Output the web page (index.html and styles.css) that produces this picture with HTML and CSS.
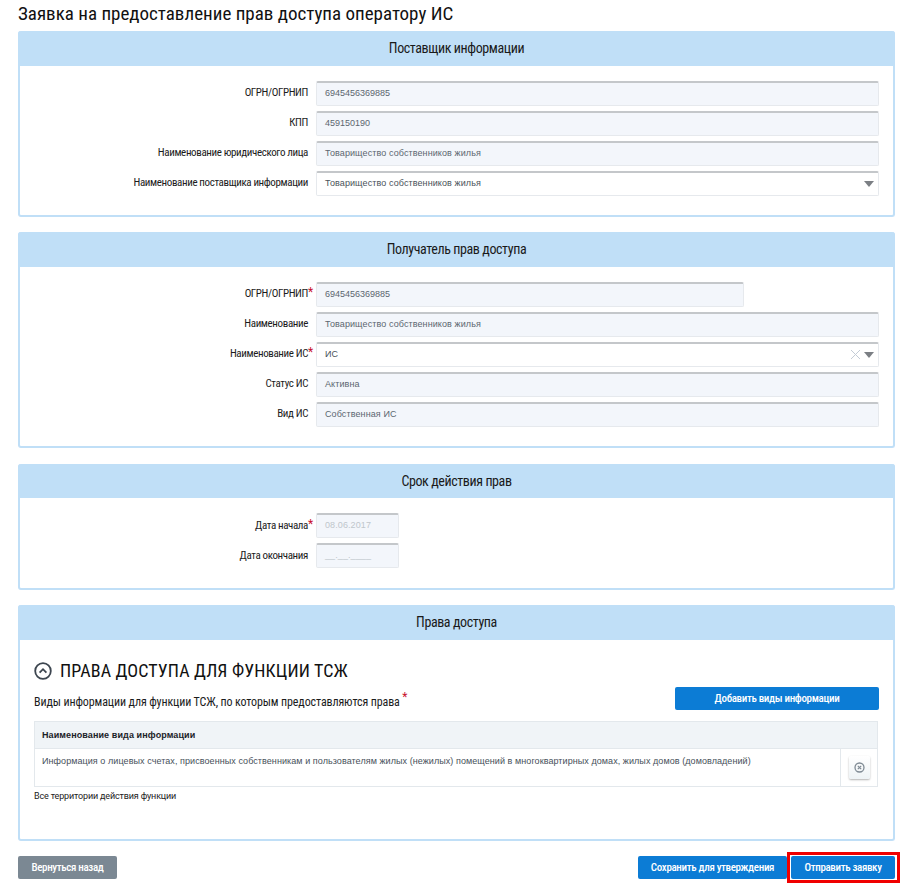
FILE: index.html
```html
<!DOCTYPE html>
<html lang="ru">
<head>
<meta charset="utf-8">
<title>Заявка</title>
<link rel="stylesheet" href="styles.css">
</head>
<body>
<h1 class="title">Заявка на предоставление прав доступа оператору ИС</h1>

<section class="panel">
  <h2 class="panel-head">Поставщик информации</h2>
  <div class="panel-body form">
    <div class="row"><label class="lbl">ОГРН/ОГРНИП</label><div class="field num">6945456369885</div></div>
    <div class="row"><label class="lbl">КПП</label><div class="field num">459150190</div></div>
    <div class="row"><label class="lbl">Наименование юридического лица</label><div class="field">Товарищество собственников жилья</div></div>
    <div class="row"><label class="lbl">Наименование поставщика информации</label><div class="field select">Товарищество собственников жилья<span class="arrow"></span></div></div>
  </div>
</section>

<section class="panel">
  <h2 class="panel-head">Получатель прав доступа</h2>
  <div class="panel-body form">
    <div class="row"><label class="lbl">ОГРН/ОГРНИП<span class="req">*</span></label><div class="field num short">6945456369885</div></div>
    <div class="row"><label class="lbl">Наименование</label><div class="field">Товарищество собственников жилья</div></div>
    <div class="row"><label class="lbl">Наименование ИС<span class="req">*</span></label><div class="field select">ИС
      <svg class="clear" width="11" height="11" viewBox="0 0 11 11"><path d="M1 1l9 9M10 1l-9 9" stroke="#c3ccd6" stroke-width="1" fill="none"/></svg><span class="arrow"></span></div></div>
    <div class="row"><label class="lbl">Статус ИС</label><div class="field">Активна</div></div>
    <div class="row"><label class="lbl">Вид ИС</label><div class="field">Собственная ИС</div></div>
  </div>
</section>

<section class="panel">
  <h2 class="panel-head">Срок действия прав</h2>
  <div class="panel-body form">
    <div class="row"><label class="lbl">Дата начала<span class="req">*</span></label><div class="field date muted">08.06.2017</div></div>
    <div class="row"><label class="lbl">Дата окончания</label><div class="field date muted">__.__.____</div></div>
  </div>
</section>

<section class="panel last">
  <h2 class="panel-head">Права доступа</h2>
  <div class="panel-body rights">
    <div class="fn-head">
      <svg class="fn-icon" width="18" height="18" viewBox="0 0 18 18"><circle cx="9" cy="9" r="7.8" fill="none" stroke="#3d4650" stroke-width="1.8"/><path d="M5.6 10.6L9 7.2l3.4 3.4" fill="none" stroke="#3d4650" stroke-width="1.8"/></svg>
      <span>ПРАВА ДОСТУПА ДЛЯ ФУНКЦИИ ТСЖ</span>
    </div>
    <div class="info-row">
      <div class="info-label">Виды информации для функции ТСЖ, по которым предоставляются права <sup class="req">*</sup></div>
      <button class="btn btn-add" type="button">Добавить виды информации</button>
    </div>
    <table class="tbl">
      <thead><tr><th colspan="2">Наименование вида информации</th></tr></thead>
      <tbody><tr>
        <td>Информация о лицевых счетах, присвоенных собственникам и пользователям жилых (нежилых) помещений в многоквартирных домах, жилых домов (домовладений)</td>
        <td class="act"><button class="del" type="button" aria-label="Удалить"><svg width="11" height="11" viewBox="0 0 11 11"><circle cx="5.5" cy="5.5" r="4.5" fill="none" stroke="#7f8a94" stroke-width="1.3"/><path d="M3.8 3.8l3.4 3.4M7.2 3.8l-3.4 3.4" stroke="#7f8a94" stroke-width="1.2" fill="none"/></svg></button></td>
      </tr></tbody>
    </table>
    <div class="note">Все территории действия функции</div>
  </div>
</section>

<footer class="actions">
  <button class="btn btn-grey" type="button">Вернуться назад</button>
  <div class="actions-right">
    <button class="btn btn-save" type="button">Сохранить для утверждения</button>
    <span class="highlight"><button class="btn btn-send" type="button">Отправить заявку</button></span>
  </div>
</footer>
</body>
</html>
```
FILE: styles.css
```css
* { box-sizing: border-box; }
html, body { margin: 0; padding: 0; background: #fff; }
body {
  width: 906px;
  height: 891px;
  overflow: hidden;
  padding: 0 11px 0 18px;
  font-family: Roboto, "Liberation Sans", sans-serif;
  font-stretch: 75%;
  color: #111;
}
.title {
  margin: 0;
  height: 31px;
  padding-top: 2px;
  font-size: 19px;
  line-height: 23px;
  font-weight: 400;
  color: #111;
}
.panel {
  border: 2px solid #c0dff7;
  border-top: 0;
  border-radius: 3px;
  margin-bottom: 15.7px;
  background: #fff;
}
.panel-head {
  margin: 0 -2px;
  height: 34.5px;
  background: #c0dff7;
  border-radius: 3px 3px 0 0;
  font-size: 14px;
  font-weight: 400;
  line-height: 35px;
  letter-spacing: -.4px;
  text-align: center;
  color: #1a1a1a;
}
.form { padding: 15px 0 19.3px; display: flex; flex-direction: column; gap: 5px; }
.row { display: flex; align-items: center; height: 25px; }
.lbl {
  width: 288px;
  flex: none;
  text-align: right;
  font-size: 11px;
  line-height: 14px;
  letter-spacing: -.38px;
  color: #1c1c1c;
  position: relative;
}
.req { color: #c8102e; font-size: 12px; letter-spacing: 0; }
.lbl .req { position: absolute; left: 288px; top: -2px; }
.field {
  margin-left: 8px;
  width: 563px;
  height: 25px;
  flex: none;
  border: 1px solid #e6e9ed;
  border-top: 2px solid #c4c7ca;
  border-radius: 2px;
  background: #f3f6fb;
  padding-left: 8px;
  font-family: "Liberation Sans", sans-serif;
  font-stretch: normal;
  font-size: 9px;
  letter-spacing: .1px;
  line-height: 21px;
  color: #5c6670;
  position: relative;
}
.num { letter-spacing: 0; }
.short { width: 428px; }
.date { width: 83px; }
.muted { color: #c0c6cc; }
.select { background: #fff; color: #4a525a; }
.arrow {
  position: absolute;
  right: 4px;
  top: 8px;
  width: 0; height: 0;
  border-left: 5px solid transparent;
  border-right: 5px solid transparent;
  border-top: 6px solid #7b7f84;
}
.clear { position: absolute; right: 17px; top: 5px; }
.rights { padding: 19px 0 0 14px; height: 198.7px; }
.fn-head {
  display: flex;
  align-items: center;
  gap: 8px;
  height: 24px;
  font-size: 18px;
  letter-spacing: .14px;
  color: #111;
}
.info-row {
  display: flex;
  justify-content: space-between;
  align-items: flex-start;
  margin-top: 4px;
  width: 845px;
  height: 23px;
}
.info-label { font-size: 12px; line-height: 15px; padding-top: 8px; letter-spacing: -.12px; color: #1c1c1c; }
.info-label .req { font-size: 12px; line-height: 0; }
.btn {
  border: 0;
  border-radius: 2px;
  height: 23px;
  font-family: Roboto, "Liberation Sans", sans-serif;
  font-stretch: 75%;
  font-size: 11px;
  font-weight: 500;
  letter-spacing: -.34px;
  color: #fff;
  background: #0c7cd5;
  padding: 0;
}
.btn-add { width: 204px; }
.tbl {
  border-collapse: collapse;
  width: 844px;
  margin-top: 11px;
  font-family: "Liberation Sans", sans-serif;
  font-stretch: normal;
  font-size: 9px;
  letter-spacing: .07px;
}
.tbl th {
  height: 27px;
  background: #f0f4f7;
  border: 1px solid #e3e8ec;
  text-align: left;
  padding: 0 7px;
  font-weight: 700;
  letter-spacing: .1px;
  color: #1b2228;
}
.tbl td {
  height: 38px;
  border: 1px solid #e3e8ec;
  padding: 6px 7px 0;
  vertical-align: top;
  color: #47505a;
  line-height: 13px;
}
.tbl .act { width: 37px; padding: 7px 0 0 8px; }
.del {
  width: 21px;
  height: 23px;
  border: 0;
  border-radius: 2px;
  padding: 0;
  display: flex;
  align-items: center;
  justify-content: center;
  background: linear-gradient(#fff, #eef3f6);
  box-shadow: 0 1px 2px rgba(0,0,0,.3);
}
.note { font-size: 9px; line-height: 12px; margin-top: 3px; letter-spacing: -.15px; color: #222; font-stretch: normal; }
.actions { display: flex; justify-content: space-between; align-items: center; height: 23px; }
.actions-right { display: flex; align-items: center; gap: 4px; }
.btn-grey { width: 99px; background: #7b8893; }
.btn-save { width: 149px; white-space: nowrap; }
.highlight { display: block; position: relative; }
.btn-send { width: 104px; display: block; }
.highlight::after {
  content: "";
  position: absolute;
  left: -4px; right: -5px; top: -4px; bottom: -4px;
  border: 3px solid #f00000;
}
```
